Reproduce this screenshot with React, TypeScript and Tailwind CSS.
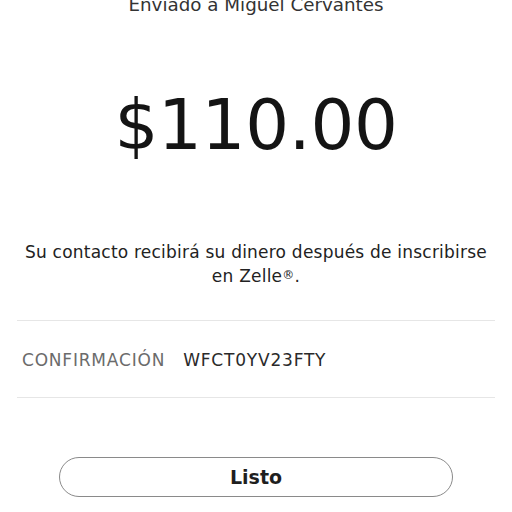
export default function App() {
  return (
    <div className="w-[512px] h-[512px] overflow-hidden bg-white text-[#1a1a1a]" style={{ fontFamily: '"DejaVu Sans", sans-serif' }}>
      <div className="flex flex-col items-center -mt-[7px]">
        <div className="text-[18.3px] leading-[24px] text-[#333]">Enviado a Miguel Cervantes</div>
        <div className="mt-[68px] text-[69px] leading-[80px] text-[#141414] tracking-[-0.3px]">$110.00</div>
        <div className="mt-[75px] px-[22px] text-center text-[17px] leading-[24px] tracking-[0.22px] text-[#222]">
          Su contacto recibirá su dinero después de inscribirse en Zelle<span className="text-[12px] leading-[12px] relative -top-[3px]">®</span>.
        </div>
        <div className="mt-[32px] w-[478px] border-t border-[#e6e6e6]" />
        <div className="w-[478px] h-[76px] pt-[4px] flex items-center gap-[18px] px-[5px] text-[17px] tracking-[0.8px]">
          <span className="text-[#6b6b6b]">CONFIRMACIÓN</span>
          <span className="text-[#2a2a2a]">WFCT0YV23FTY</span>
        </div>
        <div className="w-[478px] border-t border-[#e6e6e6]" />
        <button className="mt-[59px] w-[394px] h-[40px] rounded-full border border-[#8a8a8a] text-[19px] font-bold text-[#1f1f1f]">
          Listo
        </button>
      </div>
    </div>
  );
}
